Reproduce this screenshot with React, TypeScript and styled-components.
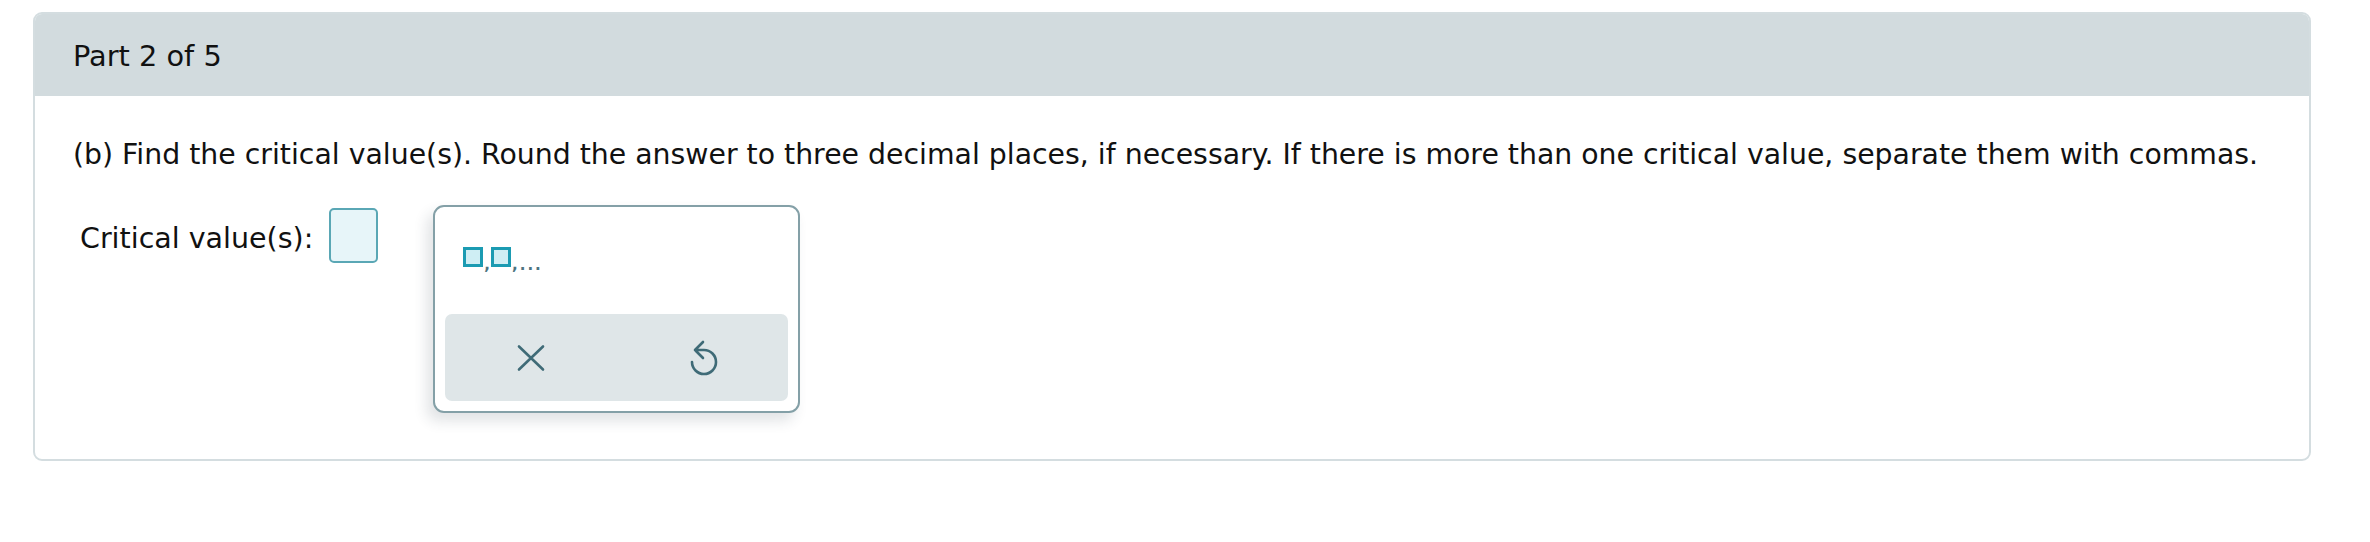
import React from 'react';
import styled, { createGlobalStyle } from 'styled-components';

const GlobalStyle = createGlobalStyle`
    html, body {
        margin: 0;
        padding: 0;
        background: #ffffff;
    }
    body {
        font-family: "DejaVu Sans", Verdana, "Liberation Sans", sans-serif;
        color: #111111;
    }
`;

const Page = styled.div`
    padding: 12px 59px 0 33px;
`;

const Card = styled.section`
    border: 2px solid #d4dde0;
    border-radius: 9px;
    background: #ffffff;
`;

const CardHeader = styled.header`
    display: flex;
    align-items: center;
    height: 82px;
    padding: 2px 0 0 38px;
    box-sizing: border-box;
    background: #d2dbde;
    border-radius: 7px 7px 0 0;
    font-size: 28.8px;
`;

const CardBody = styled.div`
    padding: 42px 38px 196px 38px;
`;

const Prompt = styled.p`
    margin: 0;
    font-size: 28.35px;
`;

const AnswerRow = styled.div`
    display: flex;
    align-items: flex-start;
    margin-top: 37px;
    padding-left: 7px;
`;

const Label = styled.span`
    font-size: 28.5px;
    margin-top: 14px;
    margin-right: 16px;
`;

const Anchor = styled.div`
    position: relative;
`;

const AnswerBox = styled.div`
    width: 49px;
    height: 55px;
    box-sizing: border-box;
    border: 2px solid #5aa7b5;
    border-radius: 5px;
    background: #e7f5f9;
`;

const Palette = styled.div`
    position: absolute;
    left: calc(100% + 55px);
    top: -3px;
    width: 367px;
    height: 208px;
    box-sizing: border-box;
    border: 2px solid #84a0a7;
    border-radius: 11px;
    background: #ffffff;
    padding: 0 10px 10px;
    display: flex;
    flex-direction: column;
    box-shadow: -6px 8px 14px rgba(40, 60, 70, 0.14);
`;

const TemplateArea = styled.div`
    height: 107px;
    box-sizing: border-box;
    padding: 40px 0 0 18px;
`;

const TemplateButton = styled.div`
    display: inline-flex;
    align-items: flex-end;
    gap: 1px;
`;

const Slot = styled.span`
    width: 20px;
    height: 20px;
    box-sizing: border-box;
    border: 3px solid #1b9bb2;
    background: #cfeef4;
`;

const Sep = styled.span<{ $wide?: boolean }>`
    font-size: 15px;
    font-weight: bold;
    line-height: 12px;
    color: #4d7480;
    letter-spacing: ${p => (p.$wide ? '2px' : '0')};
    margin-bottom: -4px;
`;

const ActionBar = styled.div`
    flex: 1;
    display: flex;
    background: #dfe6e8;
    border-radius: 7px;
`;

const ActionButton = styled.button`
    flex: 1;
    display: flex;
    align-items: center;
    justify-content: center;
    border: none;
    background: transparent;
    padding: 0;
    cursor: pointer;
    color: #3f6b77;
`;

const ClearIcon = () => (
    <svg width="28" height="28" viewBox="0 0 28 28" fill="none">
        <path d="M2 2.5 L26 25.5 M26 2.5 L2 25.5" stroke="currentColor" strokeWidth="2.6" strokeLinecap="round" />
    </svg>
);

const UndoIcon = () => (
    <svg width="30" height="38" viewBox="0 0 30 38" fill="none">
        <path
            d="M16 11 A12 12 0 1 1 4 23 M16 11 H7 M15 3 L7 11 L15 19"
            stroke="currentColor"
            strokeWidth="2.6"
            strokeLinecap="round"
            strokeLinejoin="round"
        />
    </svg>
);

const App: React.FC = () => {
    return (
        <Page>
            <GlobalStyle />
            <Card>
                <CardHeader>Part 2 of 5</CardHeader>
                <CardBody>
                    <Prompt>
                        (b) Find the critical value(s). Round the answer to three decimal places, if necessary. If there is more than one critical value, separate them with commas.
                    </Prompt>
                    <AnswerRow>
                        <Label>Critical value(s):</Label>
                        <Anchor>
                            <AnswerBox />
                            <Palette>
                                <TemplateArea>
                                    <TemplateButton>
                                        <Slot />
                                        <Sep>,</Sep>
                                        <Slot />
                                        <Sep $wide>,...</Sep>
                                    </TemplateButton>
                                </TemplateArea>
                                <ActionBar>
                                    <ActionButton aria-label="Clear">
                                        <ClearIcon />
                                    </ActionButton>
                                    <ActionButton aria-label="Undo">
                                        <UndoIcon />
                                    </ActionButton>
                                </ActionBar>
                            </Palette>
                        </Anchor>
                    </AnswerRow>
                </CardBody>
            </Card>
        </Page>
    );
};

export default App;
